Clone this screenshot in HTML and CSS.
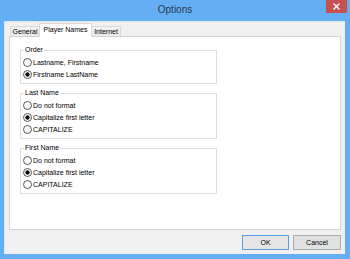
FILE: index.html
```html
<!DOCTYPE html>
<html lang="en">
  <head>
    <meta charset="UTF-8" />
    <title>Options</title>
    <link rel="stylesheet" href="styles.css">
  </head>
  <body>
    <div class="window">
      <div class="titlebar">
        <span class="title">Options</span>
        <button class="close-button" aria-label="Close">
          <svg width="7" height="7" viewBox="0 0 7 7">
            <path d="M0.5 0.5 L6.5 6.5 M6.5 0.5 L0.5 6.5" stroke="#fff" stroke-width="1.4" />
          </svg>
        </button>
      </div>

      <div class="client">
        <div class="tabs">
          <div class="tab">General</div>
          <div class="tab active">Player Names</div>
          <div class="tab">Internet</div>
        </div>

        <div class="panel">
          <div class="group">
            <div class="group-title">Order</div>
            <label class="option"><input type="radio" name="order" />Lastname, Firstname</label>
            <label class="option"><input type="radio" name="order" checked />Firstname LastName</label>
          </div>

          <div class="group">
            <div class="group-title">Last Name</div>
            <label class="option"><input type="radio" name="last" />Do not format</label>
            <label class="option"><input type="radio" name="last" checked />Capitalize first letter</label>
            <label class="option"><input type="radio" name="last" />CAPITALIZE</label>
          </div>

          <div class="group">
            <div class="group-title">First Name</div>
            <label class="option"><input type="radio" name="first" />Do not format</label>
            <label class="option"><input type="radio" name="first" checked />Capitalize first letter</label>
            <label class="option"><input type="radio" name="first" />CAPITALIZE</label>
          </div>
        </div>

        <div class="buttons">
          <button class="dlg-button default">OK</button>
          <button class="dlg-button">Cancel</button>
        </div>
      </div>
    </div>
  </body>
</html>
```

FILE: styles.css
```css
body {
  margin: 0;
  font-family: "Liberation Sans", Arial, sans-serif;
  background-color: #64aef4;
}

.window {
  width: 350px;
  height: 259px;
  display: flex;
  flex-direction: column;
  background-color: #64aef4;
  box-sizing: border-box;
  padding-bottom: 5px;
}

/* title bar */
.titlebar {
  height: 21px;
  display: grid;
  grid-template-columns: 1fr auto 1fr;
  flex-shrink: 0;
}

.title {
  grid-column: 2;
  font-size: 10px;
  line-height: 19px;
  color: #2a3a4a;
}

.close-button {
  grid-column: 3;
  justify-self: end;
  align-self: start;
  width: 21px;
  height: 13px;
  margin-right: 3px;
  padding: 0;
  border: none;
  background-color: #c75050;
  display: flex;
  align-items: center;
  justify-content: center;
}

/* client area */
.client {
  flex: 1;
  margin: 0 5px 0 4px;
  background-color: #f0f0f0;
  border-left: 1px solid #d6e6f6;
  border-top: 1px solid #d6e6f6;
  display: flex;
  flex-direction: column;
  padding: 2px 4px 4px 4px;
}

.tabs {
  display: flex;
  align-items: flex-end;
  height: 13px;
  padding-left: 1px;
  margin-bottom: -1px;
}

.tab {
  height: 11px;
  box-sizing: border-box;
  border: 1px solid #d9d9d9;
  border-bottom: none;
  background: linear-gradient(#f3f3f3, #e8e8e8);
  font-size: 7px;
  line-height: 10px;
  text-align: center;
  color: #000;
  width: 30px;
}

.tab + .tab {
  margin-left: -1px;
}

.tab.active {
  width: 53px;
  height: 14px;
  background: #fff;
  position: relative;
  z-index: 1;
  line-height: 12px;
}

.panel {
  flex: 1;
  background-color: #fff;
  border: 1px solid #d4d4d4;
  padding: 13px 0 0 10px;
  display: flex;
  flex-direction: column;
  gap: 9px;
}

/* group boxes */
.group {
  width: 197px;
  box-sizing: border-box;
  padding: 0 2px 3px 2px;
  border: 1px solid #dedede;
  display: flex;
  flex-direction: column;
}

.group-title {
  align-self: flex-start;
  margin: -6px 0 1px 1px;
  padding: 0 1px;
  background-color: #fff;
  font-size: 7px;
  line-height: 10px;
  color: #000;
}

.option {
  display: flex;
  align-items: center;
  height: 12px;
  font-size: 7px;
  color: #000;
}

.option input {
  appearance: none;
  -webkit-appearance: none;
  width: 9px;
  height: 9px;
  margin: 0 1px 0 0;
  box-sizing: border-box;
  border: 1px solid #555;
  border-radius: 50%;
  background-color: #fff;
}

.option input:checked {
  background: radial-gradient(circle, #111 0 1.9px, #fff 2.4px);
}

/* dialog buttons */
.buttons {
  display: flex;
  justify-content: flex-end;
  gap: 4px;
  margin-top: 5px;
}

.dlg-button {
  height: 15px;
  width: 48px;
  padding: 0;
  box-sizing: border-box;
  border: 1px solid #acacac;
  background-color: #e1e1e1;
  font-family: "Liberation Sans", Arial, sans-serif;
  font-size: 7px;
  color: #000;
}

.dlg-button.default {
  width: 47px;
  border-color: #5aa0e6;
  background-color: #e5e5e5;
}
```
